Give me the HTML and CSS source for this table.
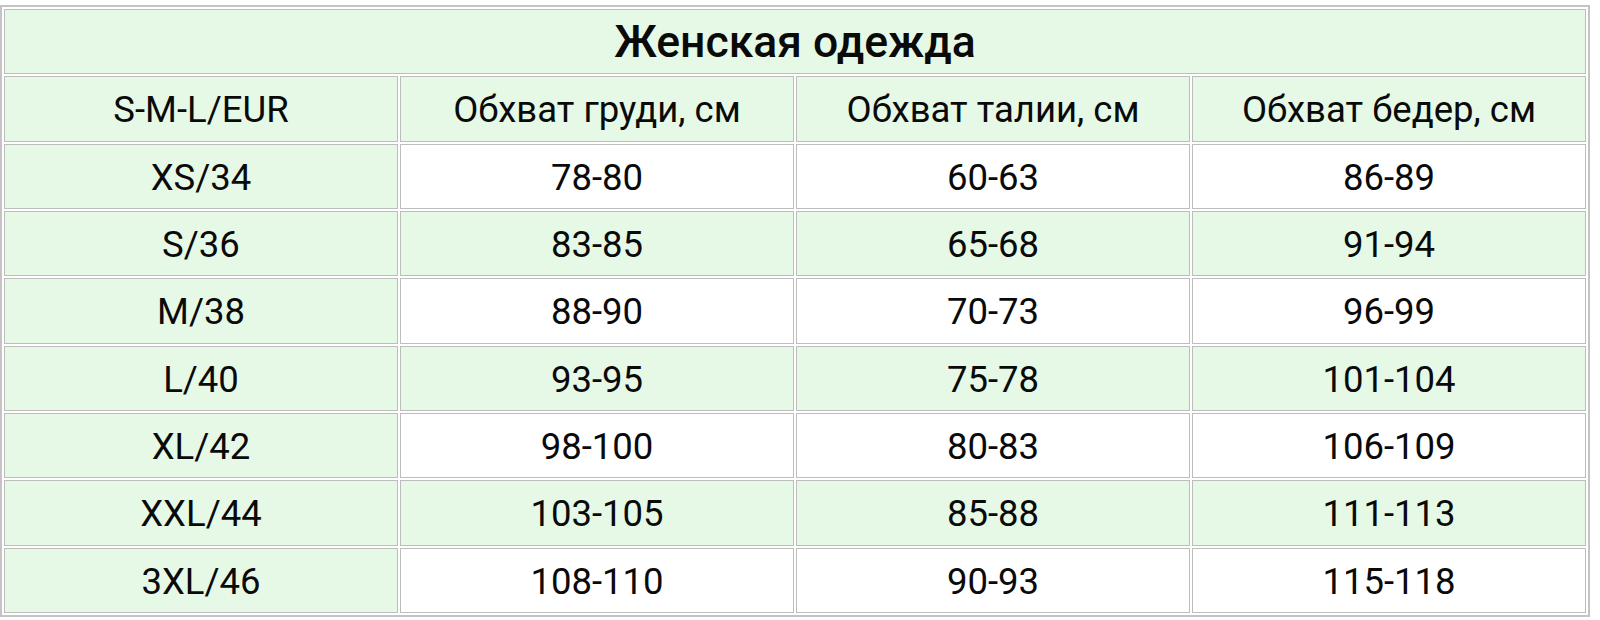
FILE: index.html
```html
<!DOCTYPE html>
<html lang="ru">
<head>
<meta charset="utf-8">
<title>Женская одежда</title>
<link rel="stylesheet" href="styles.css">
</head>
<body>
<table class="sizes">
  <tr class="title-row"><td colspan="4" class="title">Женская одежда</td></tr>
  <tr class="head"><td>S-M-L/EUR</td><td>Обхват груди, см</td><td>Обхват талии, см</td><td>Обхват бедер, см</td></tr>
  <tr><td class="size">XS/34</td><td>78-80</td><td>60-63</td><td>86-89</td></tr>
  <tr class="alt"><td class="size">S/36</td><td>83-85</td><td>65-68</td><td>91-94</td></tr>
  <tr><td class="size">M/38</td><td>88-90</td><td>70-73</td><td>96-99</td></tr>
  <tr class="alt"><td class="size">L/40</td><td>93-95</td><td>75-78</td><td>101-104</td></tr>
  <tr><td class="size">XL/42</td><td>98-100</td><td>80-83</td><td>106-109</td></tr>
  <tr class="alt"><td class="size">XXL/44</td><td>103-105</td><td>85-88</td><td>111-113</td></tr>
  <tr><td class="size">3XL/46</td><td>108-110</td><td>90-93</td><td>115-118</td></tr>
</table>
</body>
</html>
```
FILE: styles.css
```css
html, body {
  margin: 0;
  padding: 0;
  background: #ffffff;
}
body {
  padding-top: 5px;
  font-family: Roboto, "Liberation Sans", sans-serif;
  color: #0a0a0a;
}
.sizes {
  width: 1590px;
  height: 612px;
  border: 2px solid #c4c4c4;
  border-collapse: separate;
  border-spacing: 2px;
  table-layout: fixed;
}
.sizes td {
  border: 1px solid #bdbdbd;
  background: #ffffff;
  text-align: center;
  vertical-align: middle;
  font-size: 36.5px;
  line-height: 40px;
  padding: 3px 0 0;
  height: 60px;
}
.sizes .title,
.sizes .head td,
.sizes .size,
.sizes .alt td {
  background: #e6f9e6;
}
.sizes .title {
  font-weight: 500;
  font-size: 44.5px;
  line-height: 46px;
  padding-top: 0;
  height: 63px;
}
```
